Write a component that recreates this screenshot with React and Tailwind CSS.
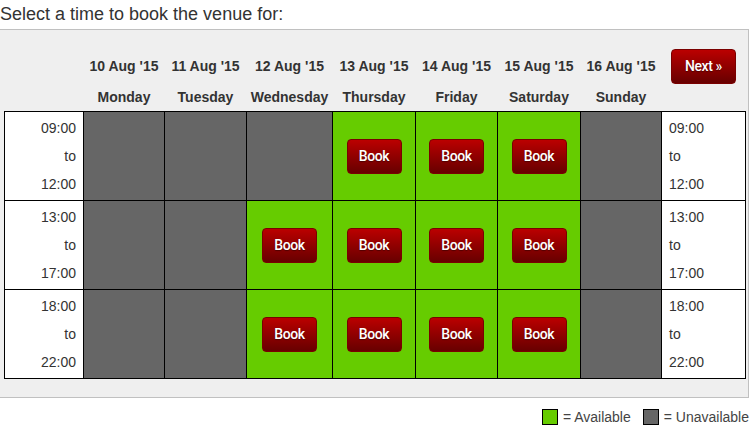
import React from "react";

const COLS = "grid-cols-[78px_80px_81px_85px_82px_81px_82px_80px_83px]";

const days = [
  ["10 Aug '15", "Monday"],
  ["11 Aug '15", "Tuesday"],
  ["12 Aug '15", "Wednesday"],
  ["13 Aug '15", "Thursday"],
  ["14 Aug '15", "Friday"],
  ["15 Aug '15", "Saturday"],
  ["16 Aug '15", "Sunday"],
];

const rows = [
  { from: "09:00", to: "12:00", avail: [0, 0, 0, 1, 1, 1, 0] },
  { from: "13:00", to: "17:00", avail: [0, 0, 1, 1, 1, 1, 0] },
  { from: "18:00", to: "22:00", avail: [0, 0, 1, 1, 1, 1, 0] },
];

function RedButton({ children, className }) {
  return (
    <button
      className={`rounded-[4px] bg-gradient-to-b from-[#bb0000] to-[#680000] border border-[#7a0000] text-white text-[14px] font-medium tracking-[-0.4px] [font-family:Roboto,'Liberation_Sans',sans-serif] [text-shadow:0_1px_1px_rgba(0,0,0,0.4)] flex items-center justify-center ${className}`}
    >
      {children}
    </button>
  );
}

export default function App() {
  return (
    <div className="w-[749px] text-[#333] [font-family:'Liberation_Sans',Arial,sans-serif]">
      <div className="h-[29px] text-[18px] leading-[29px]">Select a time to book the venue for:</div>
      <div className="bg-[#efefef] border-t border-r border-b border-[#c0c0c0] pl-[4px] pt-[18px] pb-[18px]">
        <div className={`grid ${COLS} gap-x-px px-px text-[14px] font-bold`}>
          <div className="h-[36px]" />
          {days.map(([d]) => (
            <div key={d} className="h-[36px] flex items-center justify-center whitespace-nowrap">
              {d}
            </div>
          ))}
          <div className="h-[36px] flex items-center justify-center pt-px">
            <RedButton className="w-[65px] h-[35px]">Next »</RedButton>
          </div>
          <div className="h-[27px]" />
          {days.map(([d, n]) => (
            <div key={n} className="h-[27px] flex items-center justify-center">
              {n}
            </div>
          ))}
          <div className="h-[27px]" />
        </div>
        <div className={`grid ${COLS} gap-px bg-black border border-black w-[742px]`}>
          {rows.map((r, ri) => (
            <React.Fragment key={ri}>
              <div className="bg-white h-[88px] flex flex-col justify-center items-end pr-[7px] text-[14px] leading-[28px]">
                <div>{r.from}</div>
                <div>to</div>
                <div>{r.to}</div>
              </div>
              {r.avail.map((a, ci) => (
                <div
                  key={ci}
                  className={`h-[88px] flex items-center justify-center ${a ? "bg-[#66cc00]" : "bg-[#666666]"}`}
                >
                  {a ? <RedButton className="w-[55px] h-[35px]">Book</RedButton> : null}
                </div>
              ))}
              <div className="bg-white h-[88px] flex flex-col justify-center items-start pl-[7px] text-[14px] leading-[28px]">
                <div>{r.from}</div>
                <div>to</div>
                <div>{r.to}</div>
              </div>
            </React.Fragment>
          ))}
        </div>
      </div>
      <div className="flex justify-end items-center mt-[11px] text-[14px] text-[#444] leading-[16px]">
        <span className="w-4 h-4 border border-black bg-[#66cc00]" />
        <span className="ml-[5px]">= Available</span>
        <span className="ml-[12px] w-4 h-4 border border-black bg-[#666666]" />
        <span className="ml-[5px]">= Unavailable</span>
      </div>
    </div>
  );
}
